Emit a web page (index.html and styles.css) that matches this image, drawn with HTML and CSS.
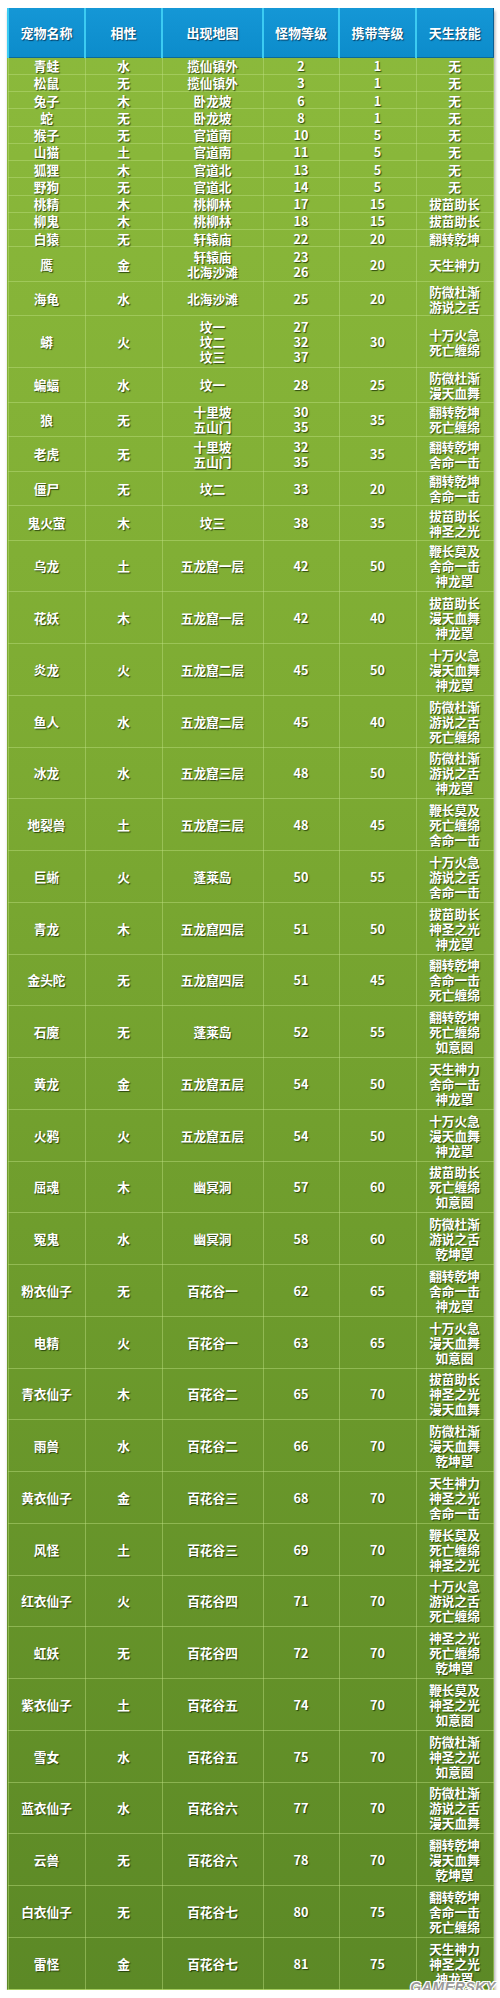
FILE: index.html
```html
<!DOCTYPE html>
<html lang="zh-CN">
<head>
<meta charset="utf-8">
<title>宠物一览</title>
<link rel="stylesheet" href="styles.css">
</head>
<body>
<div class="wrap">
<table class="pets">
<colgroup>
<col class="c1"><col class="c2"><col class="c3"><col class="c4"><col class="c5"><col class="c6">
</colgroup>
<thead>
<tr><th>宠物名称</th><th>相性</th><th>出现地图</th><th>怪物等级</th><th>携带等级</th><th>天生技能</th></tr>
</thead>
<tbody>
<tr class="l1"><td>青蛙</td><td>水</td><td>揽仙镇外</td><td>2</td><td>1</td><td>无</td></tr>
<tr class="l1"><td>松鼠</td><td>无</td><td>揽仙镇外</td><td>3</td><td>1</td><td>无</td></tr>
<tr class="l1"><td>兔子</td><td>木</td><td>卧龙坡</td><td>6</td><td>1</td><td>无</td></tr>
<tr class="l1"><td>蛇</td><td>无</td><td>卧龙坡</td><td>8</td><td>1</td><td>无</td></tr>
<tr class="l1"><td>猴子</td><td>无</td><td>官道南</td><td>10</td><td>5</td><td>无</td></tr>
<tr class="l1"><td>山猫</td><td>土</td><td>官道南</td><td>11</td><td>5</td><td>无</td></tr>
<tr class="l1"><td>狐狸</td><td>木</td><td>官道北</td><td>13</td><td>5</td><td>无</td></tr>
<tr class="l1"><td>野狗</td><td>无</td><td>官道北</td><td>14</td><td>5</td><td>无</td></tr>
<tr class="l1"><td>桃精</td><td>木</td><td>桃柳林</td><td>17</td><td>15</td><td>拔苗助长</td></tr>
<tr class="l1"><td>柳鬼</td><td>木</td><td>桃柳林</td><td>18</td><td>15</td><td>拔苗助长</td></tr>
<tr class="l1"><td>白猿</td><td>无</td><td>轩辕庙</td><td>22</td><td>20</td><td>翻转乾坤</td></tr>
<tr class="l2"><td>鹰</td><td>金</td><td>轩辕庙<br>北海沙滩</td><td>23<br>26</td><td>20</td><td>天生神力</td></tr>
<tr class="l2"><td>海龟</td><td>水</td><td>北海沙滩</td><td>25</td><td>20</td><td>防微杜渐<br>游说之舌</td></tr>
<tr class="l3"><td>蟒</td><td>火</td><td>坟一<br>坟二<br>坟三</td><td>27<br>32<br>37</td><td>30</td><td>十万火急<br>死亡缠绵</td></tr>
<tr class="l2"><td>蝙蝠</td><td>水</td><td>坟一</td><td>28</td><td>25</td><td>防微杜渐<br>漫天血舞</td></tr>
<tr class="l2"><td>狼</td><td>无</td><td>十里坡<br>五山门</td><td>30<br>35</td><td>35</td><td>翻转乾坤<br>死亡缠绵</td></tr>
<tr class="l2"><td>老虎</td><td>无</td><td>十里坡<br>五山门</td><td>32<br>35</td><td>35</td><td>翻转乾坤<br>舍命一击</td></tr>
<tr class="l2"><td>僵尸</td><td>无</td><td>坟二</td><td>33</td><td>20</td><td>翻转乾坤<br>舍命一击</td></tr>
<tr class="l2"><td>鬼火萤</td><td>木</td><td>坟三</td><td>38</td><td>35</td><td>拔苗助长<br>神圣之光</td></tr>
<tr class="l3"><td>乌龙</td><td>土</td><td>五龙窟一层</td><td>42</td><td>50</td><td>鞭长莫及<br>舍命一击<br>神龙罩</td></tr>
<tr class="l3"><td>花妖</td><td>木</td><td>五龙窟一层</td><td>42</td><td>40</td><td>拔苗助长<br>漫天血舞<br>神龙罩</td></tr>
<tr class="l3"><td>炎龙</td><td>火</td><td>五龙窟二层</td><td>45</td><td>50</td><td>十万火急<br>漫天血舞<br>神龙罩</td></tr>
<tr class="l3"><td>鱼人</td><td>水</td><td>五龙窟二层</td><td>45</td><td>40</td><td>防微杜渐<br>游说之舌<br>死亡缠绵</td></tr>
<tr class="l3"><td>冰龙</td><td>水</td><td>五龙窟三层</td><td>48</td><td>50</td><td>防微杜渐<br>游说之舌<br>神龙罩</td></tr>
<tr class="l3"><td>地裂兽</td><td>土</td><td>五龙窟三层</td><td>48</td><td>45</td><td>鞭长莫及<br>死亡缠绵<br>舍命一击</td></tr>
<tr class="l3"><td>巨蜥</td><td>火</td><td>蓬莱岛</td><td>50</td><td>55</td><td>十万火急<br>游说之舌<br>舍命一击</td></tr>
<tr class="l3"><td>青龙</td><td>木</td><td>五龙窟四层</td><td>51</td><td>50</td><td>拔苗助长<br>神圣之光<br>神龙罩</td></tr>
<tr class="l3"><td>金头陀</td><td>无</td><td>五龙窟四层</td><td>51</td><td>45</td><td>翻转乾坤<br>舍命一击<br>死亡缠绵</td></tr>
<tr class="l3"><td>石魔</td><td>无</td><td>蓬莱岛</td><td>52</td><td>55</td><td>翻转乾坤<br>死亡缠绵<br>如意圈</td></tr>
<tr class="l3"><td>黄龙</td><td>金</td><td>五龙窟五层</td><td>54</td><td>50</td><td>天生神力<br>舍命一击<br>神龙罩</td></tr>
<tr class="l3"><td>火鸦</td><td>火</td><td>五龙窟五层</td><td>54</td><td>50</td><td>十万火急<br>漫天血舞<br>神龙罩</td></tr>
<tr class="l3"><td>屈魂</td><td>木</td><td>幽冥洞</td><td>57</td><td>60</td><td>拔苗助长<br>死亡缠绵<br>如意圈</td></tr>
<tr class="l3"><td>冤鬼</td><td>水</td><td>幽冥洞</td><td>58</td><td>60</td><td>防微杜渐<br>游说之舌<br>乾坤罩</td></tr>
<tr class="l3"><td>粉衣仙子</td><td>无</td><td>百花谷一</td><td>62</td><td>65</td><td>翻转乾坤<br>舍命一击<br>神龙罩</td></tr>
<tr class="l3"><td>电精</td><td>火</td><td>百花谷一</td><td>63</td><td>65</td><td>十万火急<br>漫天血舞<br>如意圈</td></tr>
<tr class="l3"><td>青衣仙子</td><td>木</td><td>百花谷二</td><td>65</td><td>70</td><td>拔苗助长<br>神圣之光<br>漫天血舞</td></tr>
<tr class="l3"><td>雨兽</td><td>水</td><td>百花谷二</td><td>66</td><td>70</td><td>防微杜渐<br>漫天血舞<br>乾坤罩</td></tr>
<tr class="l3"><td>黄衣仙子</td><td>金</td><td>百花谷三</td><td>68</td><td>70</td><td>天生神力<br>神圣之光<br>舍命一击</td></tr>
<tr class="l3"><td>风怪</td><td>土</td><td>百花谷三</td><td>69</td><td>70</td><td>鞭长莫及<br>死亡缠绵<br>神圣之光</td></tr>
<tr class="l3"><td>红衣仙子</td><td>火</td><td>百花谷四</td><td>71</td><td>70</td><td>十万火急<br>游说之舌<br>死亡缠绵</td></tr>
<tr class="l3"><td>虹妖</td><td>无</td><td>百花谷四</td><td>72</td><td>70</td><td>神圣之光<br>死亡缠绵<br>乾坤罩</td></tr>
<tr class="l3"><td>紫衣仙子</td><td>土</td><td>百花谷五</td><td>74</td><td>70</td><td>鞭长莫及<br>神圣之光<br>如意圈</td></tr>
<tr class="l3"><td>雪女</td><td>水</td><td>百花谷五</td><td>75</td><td>70</td><td>防微杜渐<br>神圣之光<br>如意圈</td></tr>
<tr class="l3"><td>蓝衣仙子</td><td>水</td><td>百花谷六</td><td>77</td><td>70</td><td>防微杜渐<br>游说之舌<br>漫天血舞</td></tr>
<tr class="l3"><td>云兽</td><td>无</td><td>百花谷六</td><td>78</td><td>70</td><td>翻转乾坤<br>漫天血舞<br>乾坤罩</td></tr>
<tr class="l3"><td>白衣仙子</td><td>无</td><td>百花谷七</td><td>80</td><td>75</td><td>翻转乾坤<br>舍命一击<br>死亡缠绵</td></tr>
<tr class="l3"><td>雷怪</td><td>金</td><td>百花谷七</td><td>81</td><td>75</td><td>天生神力<br>神圣之光<br>神龙罩</td></tr>
</tbody>
</table>
<div class="mark">GAMERSKY</div>
</div>
</body>
</html>
```

FILE: styles.css
```css
html, body {
  margin: 0;
  padding: 0;
  background: #ffffff;
}

body {
  font-family: "Noto Sans CJK SC", "Noto Sans", sans-serif;
}

.wrap {
  position: relative;
  width: 485px;
  margin: 8px 0 0 7px;
}

.pets {
  width: 485px;
  table-layout: fixed;
  border-collapse: collapse;
  border-spacing: 0;
  background: linear-gradient(to bottom, #8cba3c 0%, #7eac33 35%, #6d9b2c 65%, #5c8926 100%);
  box-shadow: 1px 3px 3px rgba(0, 0, 0, 0.35);
  color: #ffffff;
  font-weight: 700;
  font-size: 12.7px;
  line-height: 15px;
  text-align: center;
}

.c1 { width: 77px; }
.c2 { width: 77px; }
.c3 { width: 101px; }
.c4 { width: 76px; }
.c5 { width: 77px; }
.c6 { width: 77px; }

.pets th {
  box-sizing: border-box;
  height: 49px;
  padding: 0;
  background: linear-gradient(to bottom, #1597d6 0%, #0c8ccb 100%);
  border-left: 2px solid #3ccbf2;
  border-right: 1px solid #0a5f92;
  border-bottom: 1px solid #0a6a9c;
  font-size: 13px;
  font-weight: 700;
  text-shadow: 1px 1px 1px rgba(0, 30, 60, 0.7);
}

.pets td {
  box-sizing: border-box;
  padding: 0;
  vertical-align: middle;
  border: 1px solid rgba(190, 225, 130, 0.45);
  text-shadow: 1px 1px 1px rgba(20, 40, 0, 0.75);
  white-space: nowrap;
}

.pets tr.l1 td { height: 17.25px; }
.pets tr.l2 td { height: 34.5px; }
.pets tr.l3 td { height: 51.75px; }

.mark {
  position: absolute;
  right: -4px;
  bottom: -4px;
  font-family: "Liberation Sans", Arial, sans-serif;
  font-style: italic;
  font-weight: 700;
  font-size: 14px;
  line-height: 14px;
  letter-spacing: 0.6px;
  color: #9a9a9a;
  text-shadow: 1px 1px 0 #ffffff, -1px -1px 0 #ffffff, 1px -1px 0 #ffffff, -1px 1px 0 #ffffff;
}
```
